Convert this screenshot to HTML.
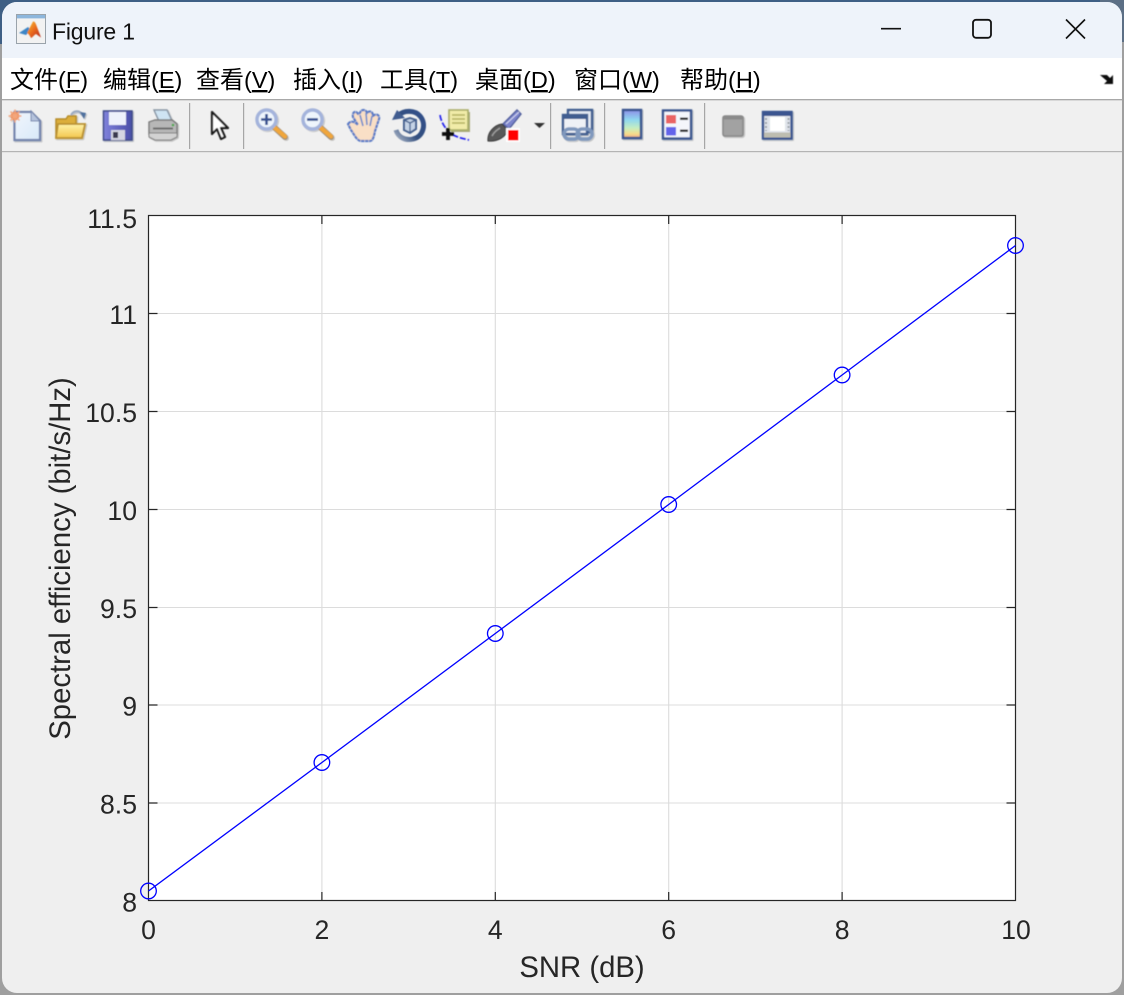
<!DOCTYPE html>
<html lang="zh">
<head>
<meta charset="utf-8">
<title>Figure 1</title>
<style>
html,body{margin:0;padding:0;width:1124px;height:995px;overflow:hidden;background:#9d9d9d}
svg{display:block}
.m{font-family:"Liberation Sans","Noto Sans CJK SC",sans-serif;fill:#000}
.c{font-size:24px;font-family:"Noto Sans CJK SC","Liberation Sans",sans-serif}
.l{font-size:23.5px;font-family:"Liberation Sans",sans-serif}
.u{text-decoration:underline}
.t{font-family:"Liberation Sans",sans-serif;font-size:26.6px;fill:#262626}
.lab{font-size:29.3px}
</style>
</head>
<body>
<svg width="1124" height="995" viewBox="0 0 1124 995" xmlns="http://www.w3.org/2000/svg">
<defs>
<filter id="b" x="-20%" y="-20%" width="140%" height="140%"><feGaussianBlur stdDeviation="0.55"/></filter>
<filter id="s" x="-10%" y="-10%" width="125%" height="125%">
<feGaussianBlur in="SourceAlpha" stdDeviation="0.8" result="a"/>
<feOffset in="a" dx="1.2" dy="1.2" result="o"/>
<feComponentTransfer in="o" result="f"><feFuncA type="linear" slope="0.3"/></feComponentTransfer>
<feGaussianBlur in="SourceGraphic" stdDeviation="0.55" result="g"/>
<feMerge><feMergeNode in="f"/><feMergeNode in="g"/></feMerge>
</filter>
<linearGradient id="cb" x1="0" y1="0" x2="0" y2="1"><stop offset="0" stop-color="#8d8fe8"/><stop offset=".35" stop-color="#8fd8ef"/><stop offset=".65" stop-color="#c6eec0"/><stop offset=".85" stop-color="#f6dd8b"/><stop offset="1" stop-color="#f0a98a"/></linearGradient>
<linearGradient id="fo" x1="0" y1="0" x2="0" y2="1"><stop offset="0" stop-color="#fff3a8"/><stop offset="1" stop-color="#f2c64e"/></linearGradient>
<linearGradient id="mg" x1="0" y1="0" x2="1" y2="1"><stop offset="0" stop-color="#f6c531"/><stop offset=".5" stop-color="#ea6a1d"/><stop offset="1" stop-color="#b3261a"/></linearGradient>
<linearGradient id="sv" x1="0" y1="0" x2="1" y2="0"><stop offset="0" stop-color="#8082dc"/><stop offset="1" stop-color="#4a4fa8"/></linearGradient>
<linearGradient id="rt" x1="1" y1="0" x2="0" y2="1"><stop offset="0" stop-color="#2f4f8a"/><stop offset=".6" stop-color="#34507f"/><stop offset="1" stop-color="#a9b4c6"/></linearGradient>
<linearGradient id="dc" x1="0" y1="0" x2="1" y2="1"><stop offset="0" stop-color="#f0f6fd"/><stop offset="1" stop-color="#d8e8f8"/></linearGradient>
</defs>
<!-- desktop behind -->
<rect width="1124" height="995" fill="#9f9f9f"/>
<rect width="1124" height="3" fill="#3e5f85"/>
<rect x="0" y="0" width="22" height="44" fill="#3e5f85"/>
<rect x="1100" y="0" width="24" height="42" fill="#5c6f85"/>
<!-- window -->
<rect x="2" y="2" width="1120" height="991" rx="15" fill="#efefef"/>
<path d="M2 58V17A15 15 0 0 1 17 2H1107A15 15 0 0 1 1122 17V58Z" fill="#eef3fa"/>
<rect x="2" y="58" width="1120" height="41" fill="#fff"/>
<rect x="2" y="99" width="1120" height="1.4" fill="#a8a8a8"/>
<rect x="2" y="100.4" width="1120" height="50.6" fill="#f0f0f0"/>
<rect x="2" y="151" width="1120" height="1.2" fill="#b4b4b4"/>

<!-- title icon -->
<g>
<rect x="16.500" y="14.500" width="29" height="29" fill="#f2f2f2" stroke="#9aa3ab"/>
<rect x="17" y="15" width="28" height="3.400" fill="#8db6dc"/>
<g filter="url(#b)">
<path d="M19 33L28 27L31 30L26 35Z" fill="#3d86c6"/>
<path d="M27 33L33 21.500C35 21 36 24 37 27L41 37.500L36 34C34 35 32 38 31 38C30 36 29 34 27 33Z" fill="url(#mg)"/>
</g>
</g>
<text x="52" y="39.500" font-family="Liberation Sans, sans-serif" font-size="23" fill="#111" textLength="83">Figure 1</text>

<!-- window controls -->
<path d="M881 28.700H901" stroke="#111" stroke-width="1.700"/>
<rect x="973" y="19.800" width="18" height="18" rx="3" fill="none" stroke="#111" stroke-width="1.800"/>
<path d="M1066 19.500L1085 38.500M1085 19.500L1066 38.500" stroke="#111" stroke-width="1.600"/>

<!-- menu -->
<text class="m" x="10" y="88"><tspan class="c">文件</tspan><tspan class="l">(<tspan class="u">F</tspan>)</tspan></text>
<text class="m" x="103" y="88"><tspan class="c">编辑</tspan><tspan class="l">(<tspan class="u">E</tspan>)</tspan></text>
<text class="m" x="196" y="88"><tspan class="c">查看</tspan><tspan class="l">(<tspan class="u">V</tspan>)</tspan></text>
<text class="m" x="293" y="88"><tspan class="c">插入</tspan><tspan class="l">(<tspan class="u">I</tspan>)</tspan></text>
<text class="m" x="380" y="88"><tspan class="c">工具</tspan><tspan class="l">(<tspan class="u">T</tspan>)</tspan></text>
<text class="m" x="475" y="88"><tspan class="c">桌面</tspan><tspan class="l">(<tspan class="u">D</tspan>)</tspan></text>
<text class="m" x="574" y="88"><tspan class="c">窗口</tspan><tspan class="l">(<tspan class="u">W</tspan>)</tspan></text>
<text class="m" x="680" y="88"><tspan class="c">帮助</tspan><tspan class="l">(<tspan class="u">H</tspan>)</tspan></text>
<path d="M1100 75H1107L1110 78L1113 75V84H1104L1107 81Z" fill="#111" filter="url(#b)"/>

<!-- separators -->
<g fill="#a6a6a6">
<rect x="189" y="103" width="1.200" height="46"/>
<rect x="243" y="103" width="1.200" height="46"/>
<rect x="550" y="103" width="1.200" height="46"/>
<rect x="604" y="103" width="1.200" height="46"/>
<rect x="704" y="103" width="1.200" height="46"/>
</g>

<!-- toolbar icons -->
<g filter="url(#s)">
<!-- new -->
<path d="M14.500 112H31L40 121V140H14.500Z" fill="url(#dc)" stroke="#7384ad" stroke-width="2.200"/>
<path d="M31 111V121H40Z" fill="#b5c3dc" stroke="#7384ad"/>
<circle cx="15" cy="116" r="4.400" fill="#ee8a55"/>
<path d="M15 109.500V122.500M8.500 116H21.500M10.500 111.500L19.500 120.500M19.500 111.500L10.500 120.500" stroke="#f3a67c" stroke-width="1.400"/>
</g>
<g filter="url(#s)">
<!-- open -->
<path d="M56 137V119H66L68 116H76V137Z" fill="#dcae3b" stroke="#b78e2c" stroke-width="1.500"/>
<path d="M56 138L58 124H85L82 138Z" fill="url(#fo)" stroke="#bb9232" stroke-width="1.800"/>
<path d="M71 115C74 110 80 110 82 115" fill="none" stroke="#9aa9bf" stroke-width="2"/>
<path d="M80 112L86 113L84 119Z" fill="#4e6f9e"/>
</g>
<g filter="url(#s)">
<!-- save -->
<rect x="103.500" y="111" width="28.500" height="29" fill="url(#sv)" stroke="#3f4b8a" stroke-width="1.500"/>
<rect x="109" y="112" width="17" height="13" fill="#eef2fb"/>
<rect x="111" y="130" width="14" height="10" fill="#d4d6e2"/>
<rect x="113" y="132" width="5" height="6" fill="#3a3a50"/>
</g>
<g filter="url(#s)">
<!-- print -->
<path d="M154 110H167L172 121H159Z" fill="#cfe4f3" stroke="#8a97a6" stroke-width="1.400"/>
<path d="M149 122L155 120H172L177 124V134H149Z" fill="#b7b7b7" stroke="#7c7c7c" stroke-width="1.400"/>
<path d="M149 133H177V137L171 140H155L149 137Z" fill="#d2d2d2" stroke="#7e7e7e"/>
<rect x="153" y="127.500" width="20" height="2" fill="#6c6c6c"/>
<circle cx="173" cy="125" r="1.300" fill="#4aa84a"/>
</g>
<!-- arrow -->
<path d="M212 112L212 134L217 129L221 139L225 137L221 128L228 128Z" fill="#fff" stroke="#1a1a1a" stroke-width="2.200" stroke-linejoin="round" filter="url(#b)"/>
<g filter="url(#s)">
<!-- zoom + -->
<path d="M274 127L285 137" stroke="#9a8a70" stroke-width="5.500" stroke-linecap="round"/>
<path d="M275 128L285 136.500" stroke="#f0a63a" stroke-width="4.200" stroke-linecap="round"/>
<circle cx="266.500" cy="119.500" r="9.500" fill="#eef5fc" stroke="#a4b4dc" stroke-width="3.400"/>
<path d="M261 119.500H272M266.500 114V125" stroke="#35508f" stroke-width="2.600"/>
</g>
<g filter="url(#s)">
<!-- zoom - -->
<path d="M320 127L331 137" stroke="#9a8a70" stroke-width="5.500" stroke-linecap="round"/>
<path d="M321 128L331 136.500" stroke="#f0a63a" stroke-width="4.200" stroke-linecap="round"/>
<circle cx="312.500" cy="119.500" r="9.500" fill="#eef5fc" stroke="#a4b4dc" stroke-width="3.400"/>
<path d="M307 119.500H318" stroke="#35508f" stroke-width="2.600"/>
</g>
<g filter="url(#b)">
<!-- hand -->
<path d="M348 124C351 120 355 122 358 125L353 117C352 112 356 110 358 114L360 113C361 109 366 109 367 113C370 110 373 112 373 116C376 113 380 115 379 119L375 131C374 136 373 141 370 141H361C357 141 354 134 351 130Z" fill="#f9dfc6" stroke="#5b7cc6" stroke-width="2.200" stroke-linejoin="round" stroke-dasharray="3.500 .5"/>
<path d="M360 115L363 126M366 113L367 125M372 116L370 126" stroke="#6f8ccc" stroke-width="1.600" fill="none"/>
</g>
<g filter="url(#b)">
<!-- rotate -->
<path d="M399 115C404 110 415 110 420 116C427 124 423 137 413 139C405 141 398 137 396 130" fill="none" stroke="url(#rt)" stroke-width="5"/>
<path d="M392 120L397 110L405 118Z" fill="#3f5b8f"/>
<path d="M404 120L410 118L416 120V129L410 133L404 130Z" fill="#c5d3e6" stroke="#44608f" stroke-width="2"/>
<path d="M404 120L410 123L416 120M410 123V133" fill="none" stroke="#44608f" stroke-width="1.300"/>
</g>
<g filter="url(#b)">
<!-- data cursor -->
<rect x="451" y="112" width="19" height="20" fill="#a9aa7a"/>
<rect x="449" y="110" width="19" height="20" fill="#f1eca8" stroke="#a9ad68" stroke-width="1.600"/>
<path d="M452 115H465M452 119H465M452 123H465" stroke="#b9b76a" stroke-width="1.800"/>
<path d="M440 115C441 122 445 128 449 132C453 136 460 138 469 140" fill="none" stroke="#2222ee" stroke-width="1.700" stroke-dasharray="6 2"/>
<path d="M448 128V140M442 134H454" stroke="#111" stroke-width="3.800"/>
</g>
<g filter="url(#b)">
<!-- brush -->
<path d="M503 124L517 110L521 114L509 129Z" fill="#7c84cc" stroke="#52609e" stroke-width="1.400"/>
<path d="M506 124L519 112" stroke="#d8dcf0" stroke-width="1"/>
<path d="M488 141C487 133 494 125 502 124L508 130C506 137 497 142 488 141Z" fill="#585858" stroke="#3a3a3a"/>
<path d="M492 136C494 132 497 130 500 128" stroke="#a0a0a0" stroke-width="1.400" fill="none"/>
<rect x="506" y="128" width="14" height="14" fill="#fff"/>
<rect x="508" y="130" width="10.500" height="10.500" fill="#f00"/>
</g>
<path d="M534 123H545L539.500 128Z" fill="#333" filter="url(#b)"/>
<g filter="url(#s)">
<!-- link -->
<rect x="568" y="110" width="24" height="22" fill="#e3e9f2" stroke="#3f5d90" stroke-width="2.400"/>
<rect x="563" y="115" width="24" height="19" fill="#eef1f6" stroke="#3f5d90" stroke-width="2.400"/>
<rect x="563" y="115" width="24" height="4" fill="#3f5d90"/>
<rect x="564" y="129" width="15" height="10" rx="5" fill="none" stroke="#7f98bd" stroke-width="3.400"/>
<rect x="577" y="129" width="15" height="10" rx="5" fill="none" stroke="#7f98bd" stroke-width="3.400"/>
</g>
<g filter="url(#s)">
<!-- colorbar -->
<rect x="623" y="110" width="18" height="28" fill="url(#cb)" stroke="#3a5590" stroke-width="2.400"/>
</g>
<g filter="url(#s)">
<!-- legend -->
<rect x="663" y="110.500" width="28" height="28" fill="#f4f6fb" stroke="#3a5590" stroke-width="2.400"/>
<rect x="666" y="115" width="10" height="8.500" fill="#ea6464"/>
<rect x="666" y="127" width="10" height="8.500" fill="#6464ea"/>
<rect x="680" y="117.500" width="8" height="2.500" fill="#333"/>
<rect x="680" y="129.500" width="8" height="2.500" fill="#333"/>
</g>
<g filter="url(#s)">
<!-- grey box -->
<rect x="723" y="116" width="20" height="20" rx="2" fill="#a2a2a2" stroke="#8a8a8a" stroke-width="1.600"/>
<rect x="723" y="116" width="20" height="3.500" fill="#8a8a8a"/>
</g>
<g filter="url(#s)">
<!-- plot tools -->
<rect x="763" y="112" width="28.500" height="26.500" fill="#dfe3ea" stroke="#3a5590" stroke-width="2.400"/>
<rect x="763" y="112" width="28.500" height="4" fill="#3a5590"/>
<rect x="770" y="117" width="15" height="14" fill="#fff"/>
<path d="M766 118V131M788.500 118V131" stroke="#9aa0a8" stroke-width="2" stroke-dasharray="2 2"/>
<rect x="764" y="132.500" width="26.500" height="5" fill="#bdbdb0"/>
</g>

<!-- axes -->
<rect x="148.500" y="215.500" width="867" height="685" fill="#fff"/>
<g stroke="#dcdcdc" stroke-width="1.100">
<path d="M321.900 216V900M495.300 216V900M668.700 216V900M842.100 216V900"/>
<path d="M149 803H1015M149 705H1015M149 607.500H1015M149 509.500H1015M149 411.500H1015M149 313.500H1015"/>
</g>
<g stroke="#262626" stroke-width="1.200" fill="none">
<rect x="148.500" y="215.500" width="867" height="685"/>
<path d="M321.900 900V892M495.300 900V892M668.700 900V892M842.100 900V892"/>
<path d="M321.900 216V224M495.300 216V224M668.700 216V224M842.100 216V224"/>
<path d="M149 803H157.500M149 705H157.500M149 607.500H157.500M149 509.500H157.500M149 411.500H157.500M149 313.500H157.500"/>
<path d="M1015 803H1006.500M1015 705H1006.500M1015 607.500H1006.500M1015 509.500H1006.500M1015 411.500H1006.500M1015 313.500H1006.500"/>
</g>
<g fill="none" stroke="#0000ff" stroke-width="1.300">
<polyline points="148.500,891 321.900,762.500 495.300,633.500 668.700,504.500 842.100,375 1015.500,245.500"/>
<circle cx="148.500" cy="891" r="7.800"/>
<circle cx="321.900" cy="762.500" r="7.800"/>
<circle cx="495.300" cy="633.500" r="7.800"/>
<circle cx="668.700" cy="504.500" r="7.800"/>
<circle cx="842.100" cy="375" r="7.800"/>
<circle cx="1015.500" cy="245.500" r="7.800"/>
</g>
<g text-anchor="end">
<text class="t" x="137" y="911.500">8</text>
<text class="t" x="137" y="813.500">8.5</text>
<text class="t" x="137" y="715.500">9</text>
<text class="t" x="137" y="618">9.5</text>
<text class="t" x="137" y="520">10</text>
<text class="t" x="137" y="422">10.5</text>
<text class="t" x="137" y="324">11</text>
<text class="t" x="137" y="228">11.5</text>
</g>
<g text-anchor="middle">
<text class="t" x="148.500" y="939">0</text>
<text class="t" x="321.900" y="939">2</text>
<text class="t" x="495.300" y="939">4</text>
<text class="t" x="668.700" y="939">6</text>
<text class="t" x="842.100" y="939">8</text>
<text class="t" x="1016" y="939">10</text>
<text class="t lab" x="582" y="977">SNR (dB)</text>
<text class="t lab" transform="translate(70 558.500) rotate(-90)">Spectral efficiency (bit/s/Hz)</text>
</g>
</svg>
</body>
</html>
